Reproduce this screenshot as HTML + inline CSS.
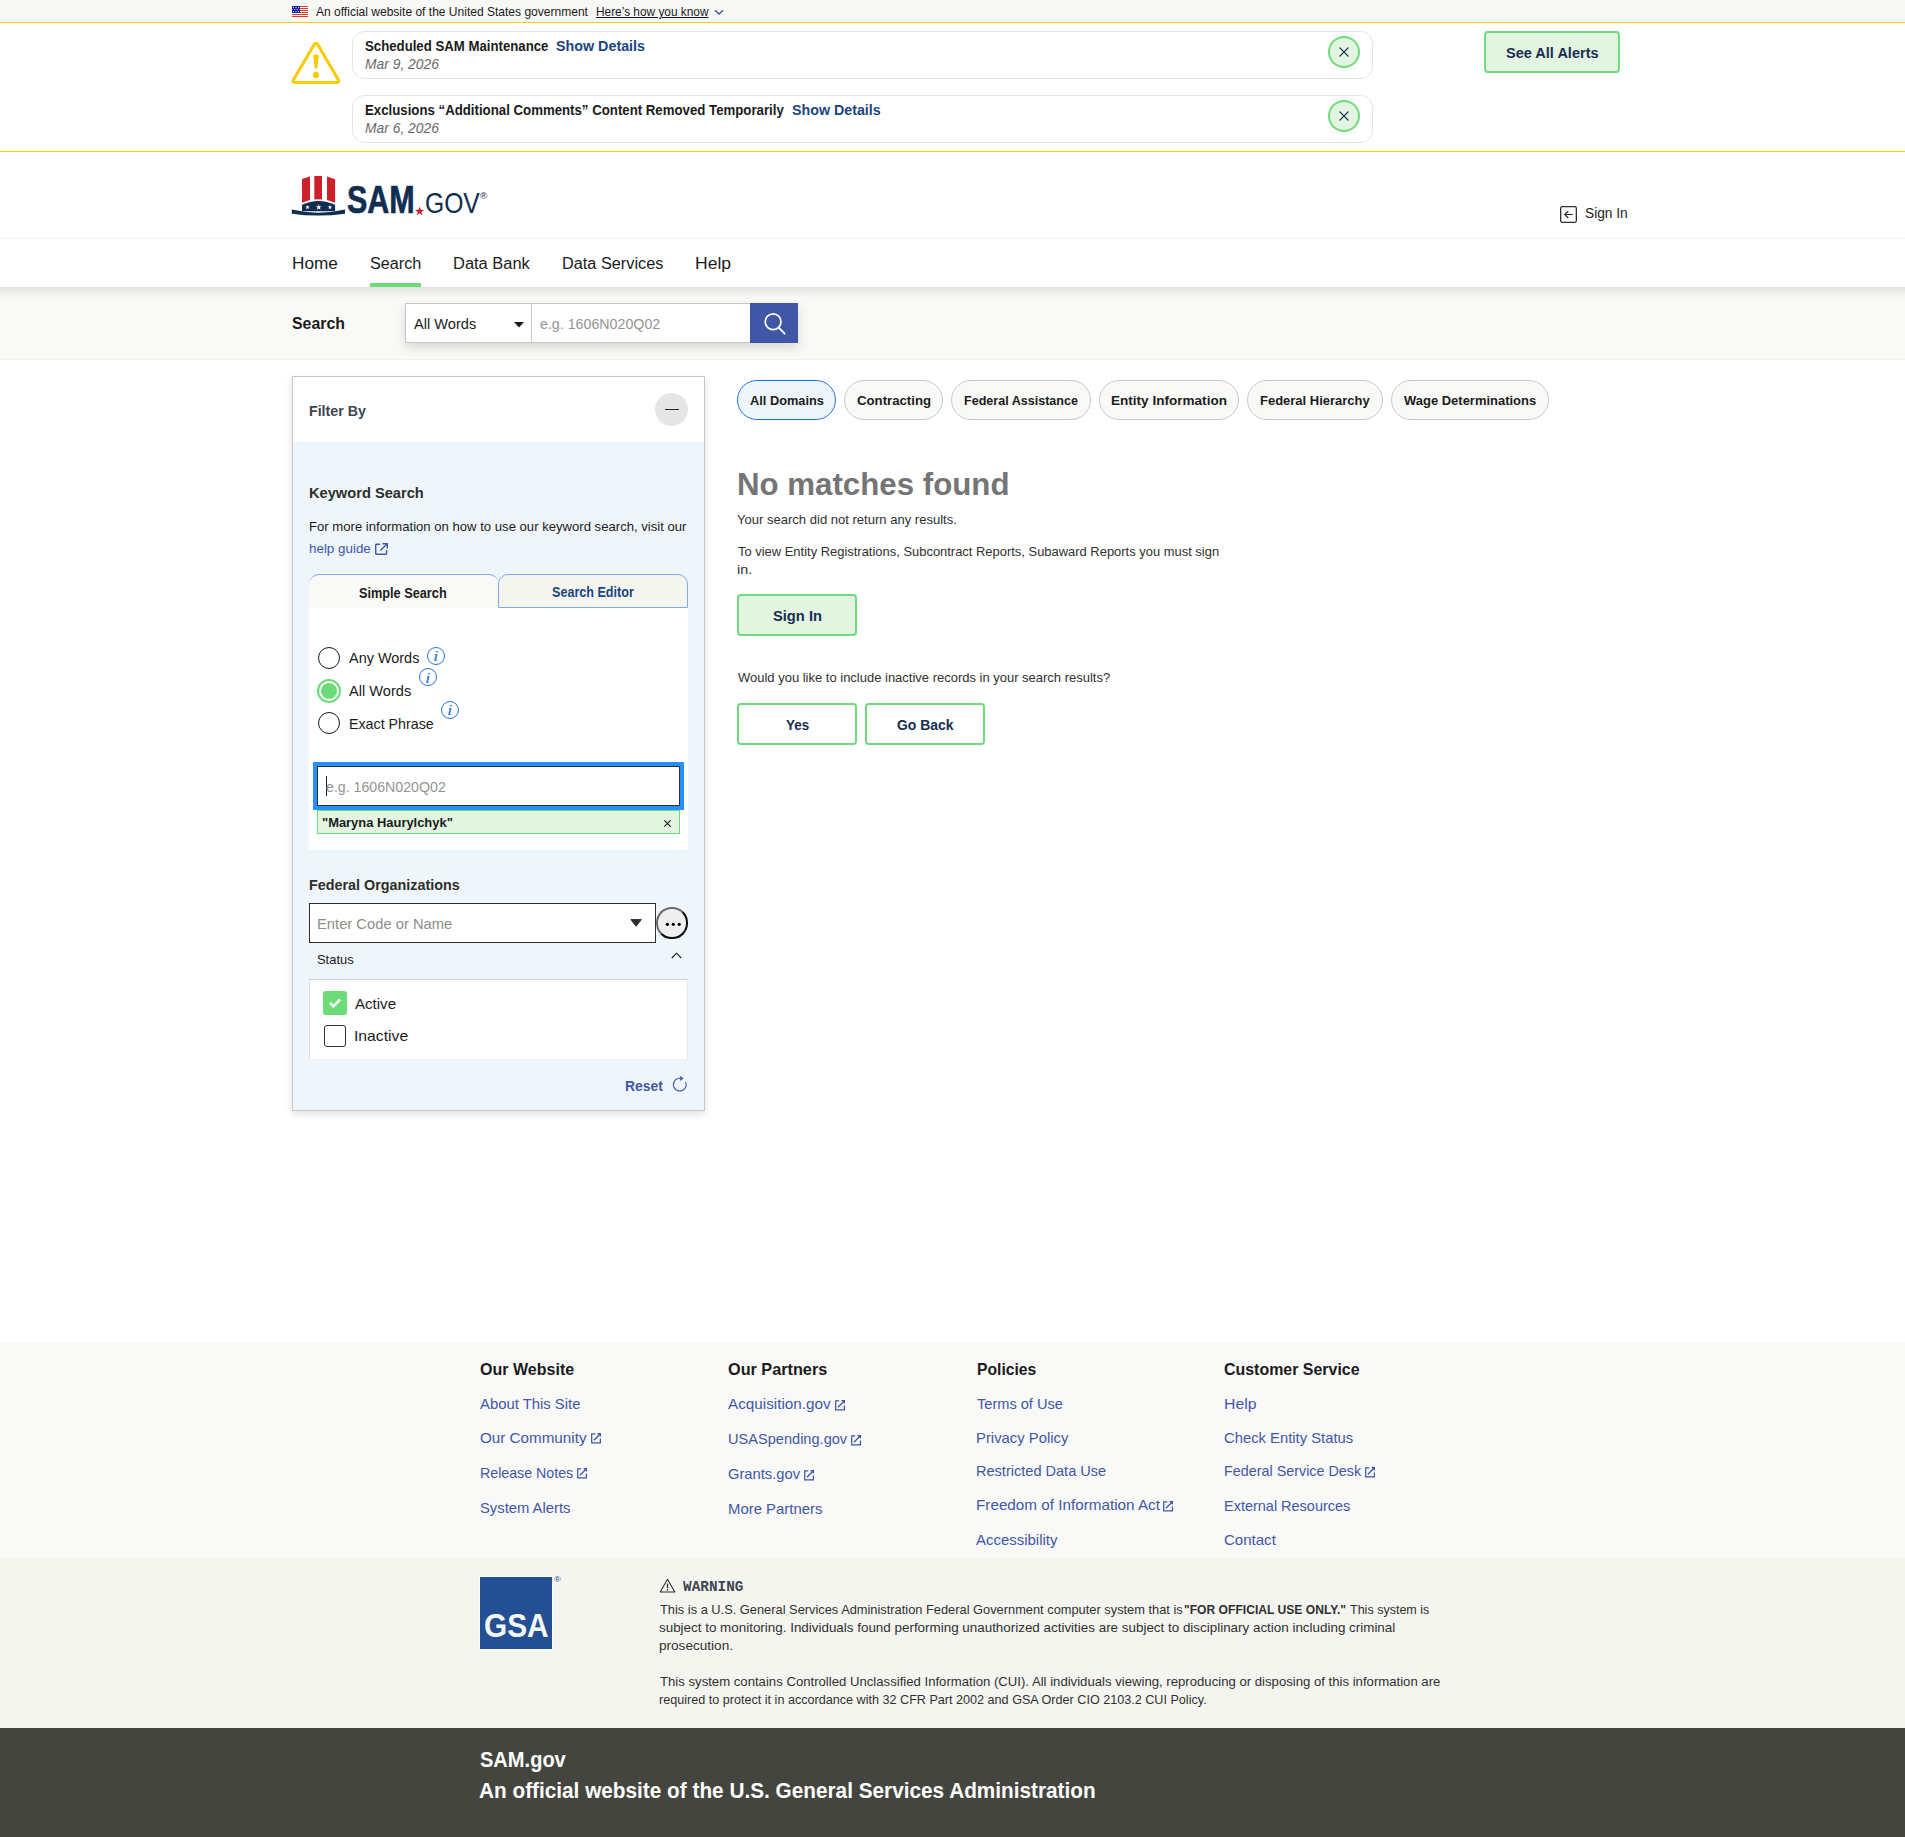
<!DOCTYPE html>
<html lang="en">
<head>
<meta charset="utf-8">
<title>SAM.gov | Search</title>
<style>
html,body{margin:0;padding:0}
body{width:1905px;height:1837px;position:relative;overflow:hidden;background:#fff;font-family:"Liberation Sans",sans-serif;color:#1b1b1b}
.a{position:absolute;box-sizing:border-box}
.t{margin:0;padding:0;text-decoration:none;font-weight:400;position:absolute;white-space:nowrap;line-height:1;transform-origin:0 0;font-family:"Liberation Sans",sans-serif}
svg{position:absolute;overflow:visible}
.pill{position:absolute;box-sizing:border-box;top:380px;height:40px;border-radius:20px;border:1px solid #c6cace;background:#f9f9f7}
.btn{padding:0;margin:0;font:inherit;appearance:none;-webkit-appearance:none;position:absolute;box-sizing:border-box;border:2px solid #6edb7c;border-radius:4px;background:#fff}
.close{position:absolute;box-sizing:border-box;width:32px;height:32px;border-radius:50%;border:2px solid #6edb7c;background:#e3f5e1}
.info{position:absolute;box-sizing:border-box;width:18px;height:18px;border-radius:50%;border:1.4px solid #2672de}
.radio{position:absolute;box-sizing:border-box;width:22px;height:22px;border-radius:50%;border:1.5px solid #1b1b1b;background:#fff}
</style>
</head>
<body>
<section aria-label="Official government website">
<div class="a" style="left:0;top:0;width:1905px;height:22px;background:#f8f8f6"></div>
<div class="a" style="left:0;top:22px;width:1905px;height:1px;background:#face00"></div>
<svg style="left:292px;top:6px" width="16" height="11" viewBox="0 0 16 11" shape-rendering="crispEdges"><rect width="16" height="11" fill="#fff"/><g fill="#dd3d1f"><rect y="0" width="16" height="1"/><rect y="2" width="16" height="1"/><rect y="4" width="16" height="1"/><rect y="6" width="16" height="1"/><rect y="8" width="16" height="1"/><rect y="10" width="16" height="1"/></g><rect width="8" height="7" fill="#1a22a6"/><g fill="#fff" shape-rendering="auto"><circle cx="1.5" cy="1.5" r=".55"/><circle cx="4" cy="1.5" r=".55"/><circle cx="6.5" cy="1.5" r=".55"/><circle cx="2.7" cy="3.5" r=".55"/><circle cx="5.2" cy="3.5" r=".55"/><circle cx="1.5" cy="5.5" r=".55"/><circle cx="4" cy="5.5" r=".55"/><circle cx="6.5" cy="5.5" r=".55"/></g></svg>
<svg style="left:714px;top:9px" width="10" height="7" viewBox="0 0 10 7"><path d="M1 1.2 L5 5 L9 1.2" fill="none" stroke="#3f57a6" stroke-width="1.5"/></svg>

<span class="t" style='left:315.75px;top:6px;font-size:12.20px;transform:scaleX(0.9871);color:#1b1b1b'>An official website of the United States government</span>
<a class="t" style='left:596.17px;top:6px;font-size:12.20px;transform:scaleX(0.9731);color:#1b1b1b;text-decoration:underline;text-underline-offset:1px'>Here’s how you know</a>
</section>
<section aria-label="System alerts">
<div class="a" style="left:0;top:151px;width:1905px;height:1px;background:#face00"></div>
<svg style="left:290px;top:40px" width="52" height="46" viewBox="290 40 52 46"><path d="M314.00 44.82 Q315.90 41.60 317.80 44.82 L338.05 79.18 Q340.00 82.50 336.15 82.50 L295.65 82.50 Q291.80 82.50 293.75 79.18 Z" fill="none" stroke="#f9cb04" stroke-width="3.1" stroke-linejoin="round"/><path d="M313.2 55.4 Q315.9 52.9 318.7 55.4 L317.4 68 Q315.9 69.3 314.5 68 Z" fill="#f9cb04"/><circle cx="315.9" cy="75" r="3.15" fill="#f9cb04"/></svg>
<div class="a" style="left:352px;top:31px;width:1021px;height:48px;border:1px solid #e4e4e2;border-radius:12px;background:#fff"></div>
<div class="a" style="left:352px;top:95px;width:1021px;height:48px;border:1px solid #e4e4e2;border-radius:12px;background:#fff"></div>
<div class="close" style="left:1328px;top:36px"></div>
<div class="close" style="left:1328px;top:100px"></div>
<svg style="left:1338.6px;top:46.5px" width="10" height="10" viewBox="0 0 10 10"><path d="M.9.9 L9.1 9.1 M9.1.9 L.9 9.1" stroke="#162e51" stroke-width="1.3" stroke-linecap="round"/></svg>
<svg style="left:1338.6px;top:110.5px" width="10" height="10" viewBox="0 0 10 10"><path d="M.9.9 L9.1 9.1 M9.1.9 L.9 9.1" stroke="#162e51" stroke-width="1.3" stroke-linecap="round"/></svg>
<button type="button" class="btn" style="left:1484px;top:31px;width:136px;height:42px;background:#e3f5e1"></button>

<span class="t" style='left:364.75px;top:39px;font-size:14.06px;transform:scaleX(0.9401);color:#1b1b1b;font-weight:700'>Scheduled SAM Maintenance</span>
<a class="t" style='left:555.64px;top:39px;font-size:14.06px;transform:scaleX(1.0180);color:#1a4480;font-weight:700'>Show Details</a>
<time class="t" style='left:365.08px;top:56px;font-size:15.00px;transform:scaleX(0.9227);color:#66686b;font-style:italic'>Mar 9, 2026</time>
<span class="t" style='left:365.45px;top:103px;font-size:14.06px;transform:scaleX(0.9419);color:#1b1b1b;font-weight:700'>Exclusions “Additional Comments” Content Removed Temporarily</span>
<a class="t" style='left:792.09px;top:103px;font-size:14.06px;transform:scaleX(1.0146);color:#1a4480;font-weight:700'>Show Details</a>
<time class="t" style='left:365.08px;top:120px;font-size:15.00px;transform:scaleX(0.9227);color:#66686b;font-style:italic'>Mar 6, 2026</time>
<a class="t" style='left:1505.64px;top:46px;font-size:14.50px;transform:scaleX(1.0014);color:#162e51;font-weight:700'>See All Alerts</a>
</section>
<header>
<div class="a" style="left:0;top:238px;width:1905px;height:1px;background:#f0f0ec"></div>
<svg style="left:288px;top:172px" width="140" height="48" viewBox="288 172 140 48"><g fill="#cd2028"><polygon points="302,178.9 310,176.5 310,200 302,202.8"/><polygon points="314.3,176 322,176 322,199.4 314.3,199.4"/><polygon points="327,176.5 335.1,179.2 335.1,202.8 327,200"/></g><path d="M302 204.8 Q318.5 197.2 335.1 204.8 V211.2 H302 Z" fill="#112e51"/><path d="M291.8 209.6 Q318.5 215.8 345 209.6 L345 213.7 Q318.5 217.5 291.8 213.7 Z" fill="#112e51"/><g fill="#fff"><polygon points="307.50,204.90 308.06,206.52 309.78,206.56 308.41,207.60 308.91,209.24 307.50,208.26 306.09,209.24 306.59,207.60 305.22,206.56 306.94,206.52"/><polygon points="318.70,204.20 319.41,206.23 321.55,206.27 319.84,207.57 320.46,209.63 318.70,208.40 316.94,209.63 317.56,207.57 315.85,206.27 317.99,206.23"/><polygon points="330.00,204.90 330.56,206.52 332.28,206.56 330.91,207.60 331.41,209.24 330.00,208.26 328.59,209.24 329.09,207.60 327.72,206.56 329.44,206.52"/></g><polygon points="419.60,206.50 420.75,209.81 424.26,209.89 421.46,212.01 422.48,215.36 419.60,213.36 416.72,215.36 417.74,212.01 414.94,209.89 418.45,209.81" fill="#cd2028"/></svg>
<svg style="left:1560px;top:206px" width="17" height="17" viewBox="0 0 17 17"><rect x=".65" y=".65" width="15.7" height="15.7" rx="1.5" fill="none" stroke="#2e2e2a" stroke-width="1.3"/><path d="M12.9 8.5 H4.8 M8.3 5 L4.8 8.5 L8.3 12" fill="none" stroke="#2e2e2a" stroke-width="1.2"/></svg>
<div class="a" style="left:370px;top:283px;width:51px;height:4px;background:#6bdc78"></div>

<span class="t" style='left:346.73px;top:181px;font-size:38.60px;transform:scaleX(0.7905);color:#112e51;font-weight:700;-webkit-text-stroke:0.7px #112e51'>SAM</span>
<span class="t" style='left:424.79px;top:189px;font-size:29.00px;transform:scaleX(0.8504);color:#112e51'>GOV</span>
<span class="t" style='left:480.00px;top:191px;font-size:9.60px;transform:scaleX(1.0272);color:#112e51'>®</span>
<a class="t" style='left:1584.79px;top:205px;font-size:15.00px;transform:scaleX(0.9138);color:#1b1b1b'>Sign In</a>
<a class="t" style='left:291.63px;top:255px;font-size:17.25px;transform:scaleX(0.9964);color:#1b1b1b'>Home</a>
<a class="t" style='left:369.80px;top:255px;font-size:17.25px;transform:scaleX(0.9392);color:#1b1b1b'>Search</a>
<a class="t" style='left:452.99px;top:255px;font-size:17.25px;transform:scaleX(0.9541);color:#1b1b1b'>Data Bank</a>
<a class="t" style='left:561.95px;top:255px;font-size:17.25px;transform:scaleX(0.9443);color:#1b1b1b'>Data Services</a>
<a class="t" style='left:694.84px;top:255px;font-size:17.25px;transform:scaleX(1.0187);color:#1b1b1b'>Help</a>
</header>
<form role="search">
<div class="a" style="left:0;top:287px;width:1905px;height:73px;border-bottom:1px solid #f1f2ec;background:linear-gradient(#e0e0de 0,#e8e8e6 2.5px,#efefed 5.5px,#f5f5f3 8.5px,#f9f9f7 12px)"></div>
<div class="a" style="left:405px;top:303px;width:393px;height:40px;box-shadow:0 5px 10px rgba(0,0,0,.13);background:#fff"></div>
<div class="a" style="left:405px;top:303px;width:127px;height:40px;border:1px solid #c6c6c4;background:#fff"></div>
<div class="a" style="left:531px;top:303px;width:220px;height:40px;border:1px solid #c6c6c4;background:#fff"></div>
<div class="a" style="left:750px;top:303px;width:48px;height:40px;background:#3f57a6"></div>
<svg style="left:514px;top:321.5px" width="10" height="6" viewBox="0 0 10 6"><path d="M0 0 H10 L5 5.6 Z" fill="#1b1b1b"/></svg>
<svg style="left:760px;top:310px" width="28" height="28" viewBox="760 310 28 28"><circle cx="773.1" cy="321.8" r="7.9" fill="none" stroke="#fff" stroke-width="1.7"/><path d="M778.8 327.6 L784.6 333.6" stroke="#fff" stroke-width="1.9" stroke-linecap="round"/></svg>

<a class="t" style='left:292.34px;top:315px;font-size:17.25px;transform:scaleX(0.9212);color:#1b1b1b;font-weight:700'>Search</a>
<label class="t" style='left:413.68px;top:316px;font-size:15.00px;transform:scaleX(0.9737);color:#1b1b1b'>All Words</label>
<span class="t" style='left:539.93px;top:316px;font-size:15.00px;transform:scaleX(0.9484);color:#939391'>e.g. 1606N020Q02</span>
</form>
<aside aria-label="Filter By">
<div class="a" style="left:292px;top:376px;width:413px;height:735px;border:1px solid #c6c7c8;background:#eff6fb;box-shadow:0 3px 8px rgba(0,0,0,.12)"></div>
<div class="a" style="left:293px;top:377px;width:411px;height:65px;background:#fff"></div>
<div class="a" style="left:655px;top:393px;width:33px;height:33px;border-radius:50%;background:#e6e6e6"></div>
<div class="a" style="left:665px;top:408.6px;width:14px;height:1.3px;background:#162e51"></div>
<svg style="left:374.5px;top:542.5px" width="13" height="12" viewBox="0 0 13 12"><path d="M5.2 1.2 H1.4 Q.7 1.2 .7 1.9 V10.6 Q.7 11.3 1.4 11.3 H10.9 Q11.6 11.3 11.6 10.6 V7" fill="none" stroke="#3f57a6" stroke-width="1.4"/><path d="M7.4 .8 H12.3 V5.6 M12.1 1 L5.3 7.6" fill="none" stroke="#3f57a6" stroke-width="1.4"/></svg>

<div class="a" style="left:309px;top:574px;width:190px;height:34px;border-top:1px solid #7ea9f3;border-radius:10px 10px 0 0;background:#f9f9f7"></div>
<div class="a" style="left:498px;top:574px;width:190px;height:34px;border:1px solid #7ea9f3;border-radius:10px 10px 0 0;background:#f5f5f0"></div>
<div class="a" style="left:309px;top:608px;width:379px;height:242px;background:#fff"></div>
<div class="radio" style="left:318px;top:647px"></div>
<div class="a" style="left:317px;top:679px;width:24px;height:24px;border-radius:50%;border:2px solid #6bdc78;background:#fff"></div>
<div class="a" style="left:321px;top:683px;width:16px;height:16px;border-radius:50%;background:#6bdc78"></div>
<div class="radio" style="left:318px;top:712px"></div>
<div class="info" style="left:427.2px;top:647.2px"></div>
<div class="info" style="left:419.2px;top:668.4px"></div>
<div class="info" style="left:441.2px;top:701.2px"></div>

<div class="a" style="left:313px;top:762px;width:371px;height:48px;background:#2491ff"></div>
<div class="a" style="left:317px;top:766px;width:363px;height:40px;border:1px solid #2e2e2a;background:#fff"></div>
<div class="a" style="left:326px;top:776px;width:1px;height:20px;background:#1b1b1b"></div>
<div class="a" style="left:317px;top:810px;width:363px;height:24px;border:1px solid #6edb7c;background:#e3f5e1"></div>
<svg style="left:663.5px;top:819.5px" width="7" height="7" viewBox="0 0 7 7"><path d="M.3.3 L6.7 6.7 M6.7.3 L.3 6.7" stroke="#1b1b1b" stroke-width="1.1"/></svg>

<div class="a" style="left:309px;top:903px;width:347px;height:40px;border:1px solid #2e2e2a;background:#fff"></div>
<svg style="left:630px;top:919px" width="13" height="8" viewBox="630 919 13 8"><path d="M630.9 919.6 H641.3 L636.1 926.2 Z" fill="#2e2e2a" stroke="#2e2e2a" stroke-width="1" stroke-linejoin="round"/></svg>
<div class="a" style="left:656px;top:907px;width:31.5px;height:31.5px;border-radius:50%;border:2px solid;border-color:#6a6a6a #0a0a0a #0a0a0a #6a6a6a;background:#efefef"></div>
<svg style="left:665px;top:922px" width="18" height="5" viewBox="665 922 18 5"><circle cx="667.4" cy="924.3" r="1.6" fill="#000"/><circle cx="673.3" cy="924.3" r="1.6" fill="#000"/><circle cx="679.2" cy="924.3" r="1.6" fill="#000"/></svg>
<svg style="left:671px;top:951px" width="12" height="8" viewBox="671 951 12 8"><path d="M671.8 958 L676.5 953.2 L681.2 958" fill="none" stroke="#1b1b1b" stroke-width="1.1"/></svg>
<div class="a" style="left:309px;top:979px;width:379px;height:81px;border:1px solid;border-color:#cdcfd1 #e6e8ea #f1f3f5 #d9dbdd;background:#fff"></div>
<div class="a" style="left:323px;top:991px;width:24px;height:24px;border-radius:3px;background:#6bdc78"></div>
<svg style="left:328px;top:997px" width="14" height="12" viewBox="0 0 14 12"><path d="M2 6 L5.4 9.2 L12 2.6" fill="none" stroke="#fff" stroke-width="2.6"/></svg>
<div class="a" style="left:324px;top:1025px;width:22px;height:22px;border-radius:3px;border:1.5px solid #2e2e2a;background:#fff"></div>
<svg style="left:672px;top:1075px" width="17" height="18" viewBox="672 1075 17 18"><path d="M680.6 1078.3 A6.4 6.4 0 1 0 685.6 1082" fill="none" stroke="#3f57a6" stroke-width="1.1"/><path d="M680.2 1075.8 L683.5 1078.4 L680.2 1081 Z" fill="#3f57a6"/></svg>

<h2 class="t" style='left:308.65px;top:403px;font-size:15.00px;transform:scaleX(0.9464);color:#3d4551;font-weight:700'>Filter By</h2>
<h3 class="t" style='left:308.62px;top:485px;font-size:15.00px;transform:scaleX(0.9765);color:#2e2e2a;font-weight:700'>Keyword Search</h3>
<span class="t" style='left:308.62px;top:520px;font-size:13.10px;transform:scaleX(1.0012);color:#1b1b1b'>For more information on how to use our keyword search, visit our</span>
<a class="t" style='left:308.70px;top:542px;font-size:13.10px;transform:scaleX(1.0220);color:#3f57a6'>help guide</a>
<a class="t" style='left:359.49px;top:586px;font-size:14.06px;transform:scaleX(0.9053);color:#1b1b1b;font-weight:700'>Simple Search</a>
<a class="t" style='left:552.25px;top:585px;font-size:14.06px;transform:scaleX(0.8955);color:#1a4480;font-weight:700'>Search Editor</a>
<label class="t" style='left:349.01px;top:650px;font-size:15.00px;transform:scaleX(0.9626);color:#1b1b1b'>Any Words</label>
<label class="t" style='left:349.25px;top:683px;font-size:15.00px;transform:scaleX(0.9731);color:#1b1b1b'>All Words</label>
<label class="t" style='left:349.06px;top:716px;font-size:15.00px;transform:scaleX(0.9495);color:#1b1b1b'>Exact Phrase</label>
<span class="t" style='left:326.12px;top:779px;font-size:15.00px;transform:scaleX(0.9447);color:#939391'>e.g. 1606N020Q02</span>
<span class="t" style='left:322.47px;top:817px;font-size:12.40px;transform:scaleX(1.0429);color:#1b1b1b;font-weight:700'>"Maryna Haurylchyk"</span>
<h3 class="t" style='left:308.52px;top:877px;font-size:15.00px;transform:scaleX(0.9575);color:#2e2e2a;font-weight:700'>Federal Organizations</h3>
<span class="t" style='left:317.07px;top:916px;font-size:15.00px;transform:scaleX(0.9829);color:#8d8d8b'>Enter Code or Name</span>
<h3 class="t" style='left:316.98px;top:953px;font-size:13.10px;transform:scaleX(0.9870);color:#1b1b1b;font-weight:400'>Status</h3>
<label class="t" style='left:355.00px;top:996px;font-size:15.00px;transform:scaleX(1.0048);color:#1b1b1b'>Active</label>
<label class="t" style='left:353.98px;top:1028px;font-size:15.00px;transform:scaleX(1.0481);color:#1b1b1b'>Inactive</label>
<a class="t" style='left:624.96px;top:1078px;font-size:15.00px;transform:scaleX(0.9238);color:#3f57a6;font-weight:700'>Reset</a>
<span class="t" style='left:433.26px;top:649px;font-size:14.50px;transform:scaleX(1.3492);color:#2672de;font-style:italic;font-family:"Liberation Serif",monospace'>i</span>
<span class="t" style='left:425.26px;top:671px;font-size:14.50px;transform:scaleX(1.3492);color:#2672de;font-style:italic;font-family:"Liberation Serif",monospace'>i</span>
<span class="t" style='left:447.26px;top:703px;font-size:14.50px;transform:scaleX(1.3492);color:#2672de;font-style:italic;font-family:"Liberation Serif",monospace'>i</span>
</aside>
<main>
<div class="pill" style="left:737px;width:99px;border-color:#2672de;background:#eff6fb"></div>
<div class="pill" style="left:844px;width:99px"></div>
<div class="pill" style="left:951px;width:140px"></div>
<div class="pill" style="left:1099px;width:140px"></div>
<div class="pill" style="left:1247px;width:136px"></div>
<div class="pill" style="left:1391px;width:158px"></div>
<button type="button" class="btn" style="left:737px;top:594px;width:120px;height:42px;background:#e3f5e1"></button>
<button type="button" class="btn" style="left:737px;top:703px;width:120px;height:42px"></button>
<button type="button" class="btn" style="left:865px;top:703px;width:120px;height:42px"></button>

<a class="t" style='left:749.74px;top:394px;font-size:13.10px;transform:scaleX(0.9771);color:#1b1b1b;font-weight:700'>All Domains</a>
<a class="t" style='left:856.97px;top:394px;font-size:13.10px;transform:scaleX(1.0079);color:#1b1b1b;font-weight:700'>Contracting</a>
<a class="t" style='left:964.16px;top:394px;font-size:13.10px;transform:scaleX(0.9584);color:#1b1b1b;font-weight:700'>Federal Assistance</a>
<a class="t" style='left:1110.90px;top:394px;font-size:13.10px;transform:scaleX(1.0351);color:#1b1b1b;font-weight:700'>Entity Information</a>
<a class="t" style='left:1259.72px;top:394px;font-size:13.10px;transform:scaleX(0.9914);color:#1b1b1b;font-weight:700'>Federal Hierarchy</a>
<a class="t" style='left:1403.75px;top:394px;font-size:13.10px;transform:scaleX(0.9908);color:#1b1b1b;font-weight:700'>Wage Determinations</a>
<h1 class="t" style='left:736.93px;top:469px;font-size:30.50px;transform:scaleX(1.0242);color:#757575;font-weight:700'>No matches found</h1>
<span class="t" style='left:737.11px;top:514px;font-size:12.40px;transform:scaleX(1.0524);color:#303030'>Your search did not return any results.</span>
<span class="t" style='left:737.67px;top:546px;font-size:12.40px;transform:scaleX(1.0442);color:#303030'>To view Entity Registrations, Subcontract Reports, Subaward Reports you must sign</span>
<span class="t" style='left:737.34px;top:564px;font-size:12.40px;transform:scaleX(1.1586);color:#303030'>in.</span>
<a class="t" style='left:772.57px;top:608px;font-size:15.00px;transform:scaleX(0.9786);color:#162e51;font-weight:700'>Sign In</a>
<span class="t" style='left:737.70px;top:672px;font-size:12.40px;transform:scaleX(1.0479);color:#303030'>Would you like to include inactive records in your search results?</span>
<a class="t" style='left:786.12px;top:717px;font-size:15.00px;transform:scaleX(0.8939);color:#162e51;font-weight:700'>Yes</a>
<a class="t" style='left:896.82px;top:717px;font-size:15.00px;transform:scaleX(0.9283);color:#162e51;font-weight:700'>Go Back</a>
</main>
<footer>
<div class="a" style="left:0;top:1343px;width:1905px;height:214px;background:#f9f9f7"></div>
<div class="a" style="left:0;top:1557px;width:1905px;height:171px;background:#f5f5f0"></div>
<div class="a" style="left:0;top:1728px;width:1905px;height:109px;background:#454540"></div>
<div class="a" style="left:479px;top:1576px;width:74px;height:74px;border:1px solid #fbfbf8;background:#235094"></div>
<svg style="left:659px;top:1577.5px" width="17" height="15" viewBox="0 0 17 15"><path d="M8.5 1.3 L15.8 14 H1.2 Z" fill="none" stroke="#2e2e2a" stroke-width="1.1" stroke-linejoin="round"/><path d="M8.5 5.6 V10" stroke="#2e2e2a" stroke-width="1.3"/><circle cx="8.5" cy="11.9" r=".8" fill="#2e2e2a"/></svg>
<svg style="left:590.5px;top:1433px" width="10" height="10.5" viewBox="0 0 10 10.5"><path d="M4.2 .9 H.7 V9.8 H9.4 V5.4" fill="none" stroke="#3f57a6" stroke-width="1.25"/><path d="M2.9 7.3 L8.9 1.2" fill="none" stroke="#3f57a6" stroke-width="1.25"/><path d="M6 .1 H10 V4.1 Z" fill="#3f57a6"/></svg>
<svg style="left:577px;top:1468px" width="10" height="10.5" viewBox="0 0 10 10.5"><path d="M4.2 .9 H.7 V9.8 H9.4 V5.4" fill="none" stroke="#3f57a6" stroke-width="1.25"/><path d="M2.9 7.3 L8.9 1.2" fill="none" stroke="#3f57a6" stroke-width="1.25"/><path d="M6 .1 H10 V4.1 Z" fill="#3f57a6"/></svg>
<svg style="left:835px;top:1399.8px" width="10" height="10.5" viewBox="0 0 10 10.5"><path d="M4.2 .9 H.7 V9.8 H9.4 V5.4" fill="none" stroke="#3f57a6" stroke-width="1.25"/><path d="M2.9 7.3 L8.9 1.2" fill="none" stroke="#3f57a6" stroke-width="1.25"/><path d="M6 .1 H10 V4.1 Z" fill="#3f57a6"/></svg>
<svg style="left:851.25px;top:1435px" width="10" height="10.5" viewBox="0 0 10 10.5"><path d="M4.2 .9 H.7 V9.8 H9.4 V5.4" fill="none" stroke="#3f57a6" stroke-width="1.25"/><path d="M2.9 7.3 L8.9 1.2" fill="none" stroke="#3f57a6" stroke-width="1.25"/><path d="M6 .1 H10 V4.1 Z" fill="#3f57a6"/></svg>
<svg style="left:803.75px;top:1470px" width="10" height="10.5" viewBox="0 0 10 10.5"><path d="M4.2 .9 H.7 V9.8 H9.4 V5.4" fill="none" stroke="#3f57a6" stroke-width="1.25"/><path d="M2.9 7.3 L8.9 1.2" fill="none" stroke="#3f57a6" stroke-width="1.25"/><path d="M6 .1 H10 V4.1 Z" fill="#3f57a6"/></svg>
<svg style="left:1163px;top:1500.75px" width="10" height="10.5" viewBox="0 0 10 10.5"><path d="M4.2 .9 H.7 V9.8 H9.4 V5.4" fill="none" stroke="#3f57a6" stroke-width="1.25"/><path d="M2.9 7.3 L8.9 1.2" fill="none" stroke="#3f57a6" stroke-width="1.25"/><path d="M6 .1 H10 V4.1 Z" fill="#3f57a6"/></svg>
<svg style="left:1365.25px;top:1466.75px" width="10" height="10.5" viewBox="0 0 10 10.5"><path d="M4.2 .9 H.7 V9.8 H9.4 V5.4" fill="none" stroke="#3f57a6" stroke-width="1.25"/><path d="M2.9 7.3 L8.9 1.2" fill="none" stroke="#3f57a6" stroke-width="1.25"/><path d="M6 .1 H10 V4.1 Z" fill="#3f57a6"/></svg>
<h2 class="t" style='left:480.27px;top:1362px;font-size:15.75px;transform:scaleX(1.0190);color:#1b1b1b;font-weight:700'>Our Website</h2>
<h2 class="t" style='left:728.00px;top:1362px;font-size:15.75px;transform:scaleX(1.0308);color:#1b1b1b;font-weight:700'>Our Partners</h2>
<h2 class="t" style='left:976.76px;top:1362px;font-size:15.75px;transform:scaleX(0.9963);color:#1b1b1b;font-weight:700'>Policies</h2>
<h2 class="t" style='left:1224.36px;top:1362px;font-size:15.75px;transform:scaleX(1.0121);color:#1b1b1b;font-weight:700'>Customer Service</h2>
<a class="t" style='left:479.68px;top:1396px;font-size:15.00px;transform:scaleX(0.9898);color:#3f57a6'>About This Site</a>
<a class="t" style='left:480.25px;top:1430px;font-size:15.00px;transform:scaleX(1.0141);color:#3f57a6'>Our Community</a>
<a class="t" style='left:479.53px;top:1465px;font-size:15.00px;transform:scaleX(0.9471);color:#3f57a6'>Release Notes</a>
<a class="t" style='left:479.81px;top:1500px;font-size:15.00px;transform:scaleX(0.9858);color:#3f57a6'>System Alerts</a>
<a class="t" style='left:728.15px;top:1396px;font-size:15.00px;transform:scaleX(1.0164);color:#3f57a6'>Acquisition.gov</a>
<a class="t" style='left:727.65px;top:1431px;font-size:15.00px;transform:scaleX(0.9719);color:#3f57a6'>USASpending.gov</a>
<a class="t" style='left:728.13px;top:1466px;font-size:15.00px;transform:scaleX(0.9819);color:#3f57a6'>Grants.gov</a>
<a class="t" style='left:728.11px;top:1501px;font-size:15.00px;transform:scaleX(0.9928);color:#3f57a6'>More Partners</a>
<a class="t" style='left:977.40px;top:1396px;font-size:15.00px;transform:scaleX(0.9714);color:#3f57a6'>Terms of Use</a>
<a class="t" style='left:975.61px;top:1430px;font-size:15.00px;transform:scaleX(0.9896);color:#3f57a6'>Privacy Policy</a>
<a class="t" style='left:975.64px;top:1463px;font-size:15.00px;transform:scaleX(0.9696);color:#3f57a6'>Restricted Data Use</a>
<a class="t" style='left:976.06px;top:1497px;font-size:15.00px;transform:scaleX(1.0169);color:#3f57a6'>Freedom of Information Act</a>
<a class="t" style='left:976.26px;top:1532px;font-size:15.00px;transform:scaleX(0.9973);color:#3f57a6'>Accessibility</a>
<a class="t" style='left:1223.98px;top:1396px;font-size:15.00px;transform:scaleX(1.0530);color:#3f57a6'>Help</a>
<a class="t" style='left:1224.06px;top:1430px;font-size:15.00px;transform:scaleX(0.9866);color:#3f57a6'>Check Entity Status</a>
<a class="t" style='left:1223.65px;top:1463px;font-size:15.00px;transform:scaleX(0.9569);color:#3f57a6'>Federal Service Desk</a>
<a class="t" style='left:1223.64px;top:1498px;font-size:15.00px;transform:scaleX(0.9649);color:#3f57a6'>External Resources</a>
<a class="t" style='left:1224.08px;top:1532px;font-size:15.00px;transform:scaleX(1.0023);color:#3f57a6'>Contact</a>
<span class="t" style='left:483.71px;top:1609px;font-size:33.50px;transform:scaleX(0.8892);color:#f7f7f2;font-weight:700'>GSA</span>
<span class="t" style='left:554.07px;top:1576px;font-size:7.00px;transform:scaleX(1.3115);color:#234d91'>®</span>
<strong class="t" style='left:683.18px;top:1580px;font-size:14.20px;transform:scaleX(1.0140);color:#3d4551;font-weight:700;font-family:"Liberation Mono",monospace'>WARNING</strong>
<span class="t" style='left:660.39px;top:1604px;font-size:12.40px;transform:scaleX(1.0356);color:#303030'>This is a U.S. General Services Administration Federal Government computer system that is</span>
<strong class="t" style='left:1183.91px;top:1604px;font-size:12.40px;transform:scaleX(0.9760);color:#303030;font-weight:700'>"FOR OFFICIAL USE ONLY."</strong>
<span class="t" style='left:1349.75px;top:1604px;font-size:12.40px;transform:scaleX(1.0106);color:#303030'>This system is</span>
<span class="t" style='left:659.10px;top:1622px;font-size:12.40px;transform:scaleX(1.0820);color:#303030'>subject to monitoring. Individuals found performing unauthorized activities are subject to disciplinary action including criminal</span>
<span class="t" style='left:659.18px;top:1640px;font-size:12.40px;transform:scaleX(1.0956);color:#303030'>prosecution.</span>
<span class="t" style='left:659.75px;top:1676px;font-size:12.40px;transform:scaleX(1.0610);color:#303030'>This system contains Controlled Unclassified Information (CUI). All individuals viewing, reproducing or disposing of this information are</span>
<span class="t" style='left:659.44px;top:1694px;font-size:12.40px;transform:scaleX(1.0173);color:#303030'>required to protect it in accordance with 32 CFR Part 2002 and GSA Order CIO 2103.2 CUI Policy.</span>
<span class="t" style='left:480.22px;top:1750px;font-size:21.50px;transform:scaleX(0.9326);color:#fff;font-weight:700'>SAM.gov</span>
<span class="t" style='left:478.90px;top:1781px;font-size:21.50px;transform:scaleX(0.9660);color:#fff;font-weight:700'>An official website of the U.S. General Services Administration</span>
</footer>
</body>
</html>
